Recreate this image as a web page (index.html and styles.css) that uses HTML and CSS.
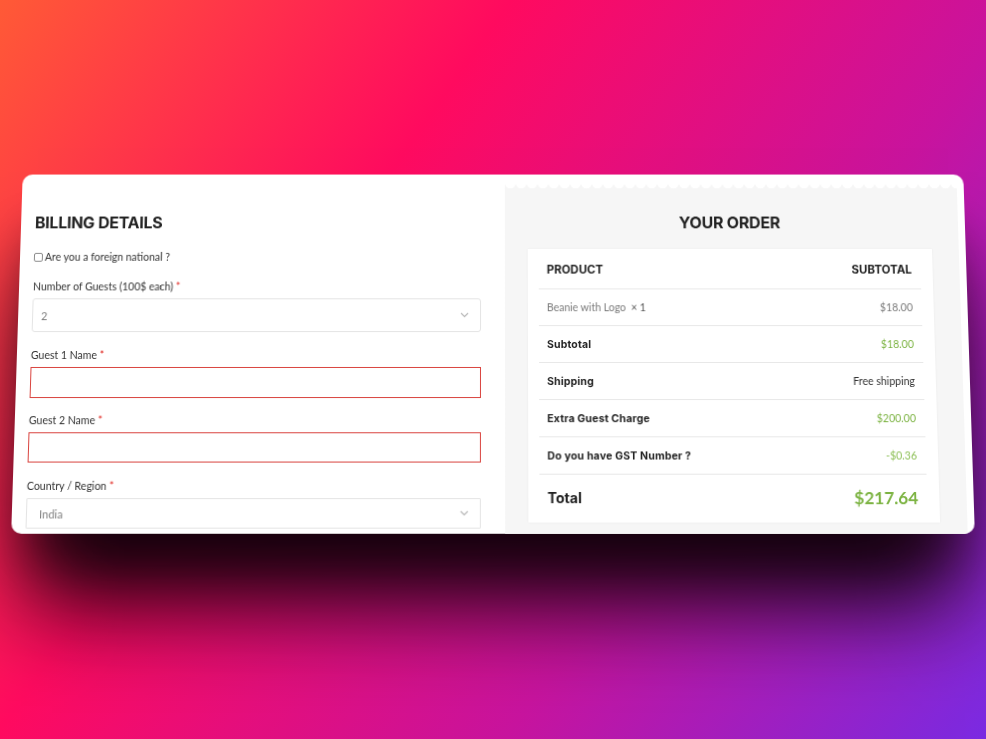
FILE: index.html
```html
<!DOCTYPE html>
<html lang="en">
<head>
<meta charset="utf-8">
<title>Checkout</title>
<link rel="stylesheet" href="styles.css">
</head>
<body>
<div class="stage">
  <div class="card">
    <section class="billing">
      <h2 class="title t-left">BILLING DETAILS</h2>
      <label class="check"><span class="box"></span>Are you a foreign national ?</label>
      <div class="field">
        <label class="lbl">Number of Guests (100$ each) <span class="req">*</span></label>
        <div class="select s1"><span>2</span><svg class="chev" width="9" height="6" viewBox="0 0 9 6"><polyline points="1,1 4.5,4.5 8,1" fill="none" stroke="#b5b5b5" stroke-width="1.1"/></svg></div>
      </div>
      <div class="field">
        <label class="lbl">Guest 1 Name <span class="req">*</span></label>
        <div class="input i1"></div>
      </div>
      <div class="field f3">
        <label class="lbl">Guest 2 Name <span class="req">*</span></label>
        <div class="input i2"></div>
      </div>
      <div class="field">
        <label class="lbl">Country / Region <span class="req">*</span></label>
        <div class="select s2"><span>India</span><svg class="chev" width="9" height="6" viewBox="0 0 9 6"><polyline points="1,1 4.5,4.5 8,1" fill="none" stroke="#b5b5b5" stroke-width="1.1"/></svg></div>
      </div>
    </section>
    <section class="order-wrap">
      <div class="order">
        <h2 class="title center">YOUR ORDER</h2>
        <div class="summary">
          <div class="row head"><span class="th">PRODUCT</span><span class="th">SUBTOTAL</span></div>
          <div class="row"><span class="item">Beanie with Logo&nbsp; <span class="qty">×&nbsp;1</span></span><span class="val">$18.00</span></div>
          <div class="row"><span class="rl">Subtotal</span><span class="val green">$18.00</span></div>
          <div class="row"><span class="rl">Shipping</span><span class="val dark">Free shipping</span></div>
          <div class="row"><span class="rl">Extra Guest Charge</span><span class="val green">$200.00</span></div>
          <div class="row"><span class="rl">Do you have GST Number ?</span><span class="val green light">-$0.36</span></div>
          <div class="row total"><span class="tl">Total</span><span class="tv">$217.64</span></div>
        </div>
      </div>
    </section>
  </div>
</div>
</body>
</html>
```
FILE: styles.css
```css
html, body {
  margin: 0;
  padding: 0;
}
.stage {
  width: 986px;
  height: 739px;
  box-sizing: border-box;
  padding-top: 172px;
  overflow: hidden;
  background: linear-gradient(125deg, #ff5a36 0%, #ff0a5f 34%, #c8139e 68%, #7a2ae2 100%);
}
.card {
  width: 952px;
  height: 360px;
  margin: 0 auto;
  display: flex;
  background: #fff;
  border-radius: 10px;
  overflow: hidden;
  transform: perspective(1000px) rotateX(3.85deg);
  transform-origin: 50% 50%;
  box-shadow: 0 85px 85px -15px rgba(18, 0, 10, 0.97), 0 40px 50px -20px rgba(18, 0, 10, 0.6);
}
.billing {
  width: 488px;
  flex: none;
  box-sizing: border-box;
  padding: 39px 24px 0 14px;
  display: flex;
  flex-direction: column;
}
.title {
  margin: 0;
  font-family: Inter, "Liberation Sans", sans-serif;
  font-weight: 700;
  font-size: 16px;
  line-height: 20px;
  color: #222;
  letter-spacing: -0.2px;
}
.t-left {
  letter-spacing: -0.25px;
}
.center {
  text-align: center;
}
.check {
  margin-top: 18px;
  height: 14px;
  display: flex;
  align-items: center;
  gap: 2px;
  font-family: Lato, "Liberation Sans", sans-serif;
  font-size: 10.5px;
  line-height: 14px;
  color: #333;
}
.box {
  width: 7px;
  height: 7px;
  border: 1px solid #8a8a8a;
  border-radius: 2px;
  background: #fff;
}
.field {
  margin-top: 16px;
  display: flex;
  flex-direction: column;
}
.f3 {
  margin-top: 15px;
}
.lbl {
  font-family: Lato, "Liberation Sans", sans-serif;
  font-size: 10.5px;
  line-height: 14px;
  color: #333;
  margin-bottom: 5px;
}
.req {
  color: #e0261f;
}
.select {
  box-sizing: border-box;
  border: 1px solid #e4e4e4;
  border-radius: 3px;
  display: flex;
  align-items: center;
  justify-content: space-between;
  padding: 0 11px 0 8px;
  font-family: Lato, "Liberation Sans", sans-serif;
  font-size: 11px;
  color: #808080;
}
.s1 {
  height: 34px;
}
.s2 {
  height: 30px;
  padding-left: 12px;
  border-radius: 1px;
}
.chev {
  display: block;
}
.input {
  box-sizing: border-box;
  border: 1px solid #d9443f;
}
.i1 {
  height: 31px;
}
.i2 {
  height: 30px;
}
.order-wrap {
  width: 464px;
  flex: none;
  box-sizing: border-box;
  padding: 9px 7px 0 0;
}
.order {
  position: relative;
  height: 100%;
  box-sizing: border-box;
  background: #f6f6f6;
  padding: 30px 27px 0 23px;
}
.order::before {
  content: "";
  position: absolute;
  left: 0;
  right: 0;
  top: 0;
  height: 6px;
  background: radial-gradient(circle at 5.5px 0, #fff 5px, rgba(255, 255, 255, 0) 5.6px) 0 0 / 11px 6px repeat-x;
}
.summary {
  margin-top: 16.5px;
  background: #fff;
  padding: 0 12px 3px 11px;
  box-shadow: 0 0 2px rgba(0, 0, 0, 0.06);
}
.row {
  box-sizing: border-box;
  height: 37px;
  border-bottom: 1px solid #e8e8e8;
  display: flex;
  align-items: center;
  justify-content: space-between;
  padding: 1px 9px 0 8px;
}
.row.head {
  height: 41px;
  padding-top: 3px;
}
.row.total {
  height: 44px;
  border-bottom: none;
}
.th {
  font-family: Inter, "Liberation Sans", sans-serif;
  font-weight: 700;
  font-size: 11.5px;
  color: #222;
}
.rl {
  font-family: Inter, "Liberation Sans", sans-serif;
  font-weight: 700;
  font-size: 10.5px;
  letter-spacing: 0.15px;
  color: #222;
}
.item, .val {
  font-family: Lato, "Liberation Sans", sans-serif;
  font-size: 10.5px;
  color: #7a7a7a;
}
.qty {
  color: #555;
}
.val.dark {
  color: #333;
}
.val.green {
  color: #7cb342;
}
.val.light {
  color: #8cbf55;
}
.tl {
  font-family: Inter, "Liberation Sans", sans-serif;
  font-weight: 700;
  font-size: 14px;
  color: #222;
}
.tv {
  font-family: Lato, "Liberation Sans", sans-serif;
  font-weight: 700;
  font-size: 17px;
  color: #7cb342;
}
```
